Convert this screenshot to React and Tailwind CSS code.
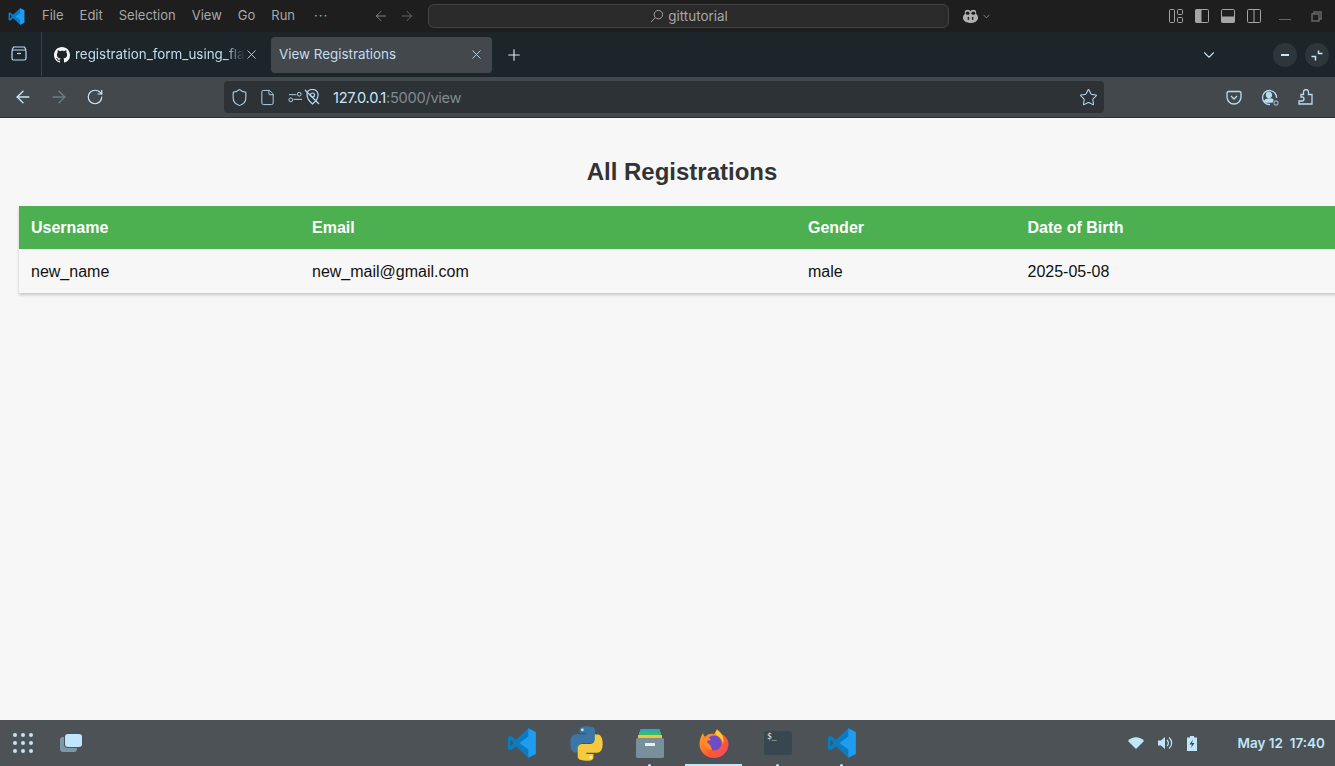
import React from 'react';
import { ArrowLeft, ArrowRight, RotateCw, Shield, File, Star, X, Plus, ChevronDown } from 'lucide-react';

const font = "font-['Inter','Noto_Sans',sans-serif]";

const VSCodeLogo = ({ size = 18 }) => (
  <svg width={size} height={size} viewBox="0 0 100 100">
    <path d="M71 99 L96 87 V13 L71 1 L30 39 L12 25 L3 30 V70 L12 75 L30 61 Z M71 28 V72 L41 50 Z M12 38 L22 50 L12 62 Z" fill="#0a7cc4" fillRule="evenodd" />
    <path d="M71 1 L96 13 V87 L71 99 Z M71 28 L41 50 L71 72 Z" fill="#1f9cf0" fillRule="evenodd" />
  </svg>
);

const GithubMark = () => (
  <svg width="16" height="16" viewBox="0 0 16 16" fill="#f4f6f7">
    <path d="M8 0C3.58 0 0 3.58 0 8c0 3.54 2.29 6.53 5.47 7.59.4.07.55-.17.55-.38 0-.19-.01-.82-.01-1.49-2.01.37-2.53-.49-2.69-.94-.09-.23-.48-.94-.82-1.13-.28-.15-.68-.52-.01-.53.63-.01 1.08.58 1.23.82.72 1.21 1.87.87 2.33.66.07-.52.28-.87.51-1.07-1.78-.2-3.64-.89-3.64-3.95 0-.87.31-1.59.82-2.15-.08-.2-.36-1.02.08-2.12 0 0 .67-.21 2.2.82.64-.18 1.32-.27 2-.27s1.36.09 2 .27c1.53-1.04 2.2-.82 2.2-.82.44 1.1.16 1.92.08 2.12.51.56.82 1.27.82 2.15 0 3.07-1.87 3.75-3.65 3.95.29.25.54.73.54 1.48 0 1.07-.01 1.93-.01 2.2 0 .21.15.46.55.38A8.01 8.01 0 0 0 16 8c0-4.42-3.58-8-8-8z" />
  </svg>
);

const PythonLogo = () => (
  <svg width="37" height="37" viewBox="0 0 32 32" className="shrink-0">
    <path d="M15.9 1C9.8 1 10 3.7 10 3.7V7h6.1v1H6.8S2 7.400 2 15.700s4.300 8 4.300 8h2.500v-3.900s-.1-4.300 4.200-4.300h6.600s4 .1 4-3.900V4.700S24.200 1 15.900 1z" fill="#3a76a8" />
    <circle cx="12.400" cy="4.200" r="1.200" fill="#dbe8f2" />
    <path d="M16.100 31c6.100 0 5.900-2.700 5.900-2.700V25h-6.100v-1h9.300s4.800.6 4.800-7.700-4.300-8-4.300-8h-2.500v3.900s.1 4.300-4.200 4.300h-6.600s-4-.1-4 3.900v6.900S7.800 31 16.100 31z" fill="#f7c93e" />
    <circle cx="19.600" cy="27.800" r="1.200" fill="#fdf3c9" />
  </svg>
);

const FilesIcon = () => (
  <svg width="30" height="32" viewBox="0 0 30 32">
    <path d="M5 3 a1 1 0 0 1 1-1 h18 a1 1 0 0 1 1 1 v3 H5 Z" fill="#29a9c9" />
    <rect x="4" y="5" width="22" height="3" fill="#3fb86f" />
    <rect x="3" y="8" width="24" height="3" fill="#f6c42f" />
    <rect x="1" y="11" width="28" height="20" rx="1.500" fill="#78909c" />
    <rect x="10" y="16" width="10" height="3" rx="0.500" fill="#eceff1" />
  </svg>
);

const FirefoxLogo = () => (
  <svg width="30" height="30" viewBox="0 0 30 30">
    <defs>
      <linearGradient id="fx" x1="0" y1="0" x2="1" y2="1">
        <stop offset="0" stopColor="#ffb02e" />
        <stop offset="0.6" stopColor="#ff5a2c" />
        <stop offset="1" stopColor="#f0447a" />
      </linearGradient>
    </defs>
    <path d="M18 1 C20 3 21 4 22 6 C27 8 29.500 12 29.500 16 A14.500 14 0 0 1 .5 16 C.5 12 2 8 4 5 C4.500 7 5 8 6 9 C8 6 12 5 15 6 C16 4 17 3 18 1 Z" fill="url(#fx)" />
    <circle cx="15" cy="15" r="7.500" fill="#6e4bc9" />
    <path d="M3 9 C6 8 11 9 12 12 C9 12 8 13 8 14 C10 16 12 17 13 22 C7 21 3 16 3 9 Z" fill="#ff8a24" />
    <path d="M18 2 C22 4 26 9 24 16 C23 11 21 9 17 7 C16 5 17 3 18 2 Z" fill="#ffc933" />
  </svg>
);

const TerminalIcon = () => (
  <div className="w-7 h-6 rounded-[2px] bg-[#37474f] px-[3px] text-[8px] leading-[11px] text-[#eceff1] font-['DejaVu_Sans_Mono',monospace]">$_</div>
);

const DockApp = ({ children, dot, className = '' }) => (
  <div className={`relative flex items-center justify-center w-8 h-8 ${className}`}>
    {children}
    {dot && <div className="absolute -bottom-[7px] left-[14px] w-[3px] h-[2px] rounded-t-full bg-[#bfe6fb]" />}
  </div>
);

const MenuItem = ({ label }) => <span className="text-[13px] text-[#a8a8a8]">{label}</span>;

const LayoutIcon = ({ children }) => (
  <svg width="14" height="14" viewBox="0 0 14 14" fill="none" stroke="#a5a5a5">{children}</svg>
);

const TitleBar = () => (
  <div className="relative flex items-center h-8 bg-[#1e1e1e] shrink-0">
    <div className="ml-[8px] w-[18px]"><VSCodeLogo size={17} /></div>
    <div className="flex items-center gap-[16px] ml-[16px] w-[332px]">
      <MenuItem label="File" />
      <MenuItem label="Edit" />
      <MenuItem label="Selection" />
      <MenuItem label="View" />
      <MenuItem label="Go" />
      <MenuItem label="Run" />
      <span className="ml-[3px] text-[13px] tracking-[1px] text-[#a8a8a8]">···</span>
    </div>
    <ArrowLeft size={16} strokeWidth={1.2} className="text-[#9a9a9a] -ml-[1px]" />
    <ArrowRight size={16} strokeWidth={1.2} className="text-[#777] ml-[10px]" />
    <div className="ml-[13px] flex items-center justify-center gap-1 w-[521px] h-6 rounded-md bg-[#2a2a2a] border border-[#444] text-[13.4px] text-[#a8a8a8]">
      <svg width="15" height="15" viewBox="0 0 16 16" fill="none" stroke="#a8a8a8"><circle cx="10" cy="6" r="4.500" /><path d="M6.500 9.500 L2 14" /></svg>
      gittutorial
    </div>
    <svg width="17" height="16" viewBox="0 0 18 16" className="ml-[13px]" fill="#b0b0b0">
      <path d="M3 4 C3 1 7 1 8 2 L9 3 L10 2 C11 1 15 1 15 4 V6 C17 7 17 10 17 11 C15 15 12 15.500 9 15.500 C6 15.500 3 15 1 11 C1 10 1 7 3 6 Z" />
      <ellipse cx="6" cy="5" rx="2" ry="1.800" fill="#1e1e1e" />
      <ellipse cx="12" cy="5" rx="2" ry="1.800" fill="#1e1e1e" />
      <rect x="6" y="9" width="1.500" height="3" fill="#1e1e1e" />
      <rect x="10.500" y="9" width="1.500" height="3" fill="#1e1e1e" />
    </svg>
    <ChevronDown size={11} className="text-[#8a8a8a] ml-[2px]" />
    <div className="ml-auto flex items-center gap-[12px] mr-[13px]">
      <LayoutIcon><rect x="0.500" y="0.500" width="5" height="13" rx="1" /><rect x="8.500" y="0.500" width="5" height="5" rx="1" /><rect x="8.500" y="8.500" width="5" height="5" rx="1" /></LayoutIcon>
      <LayoutIcon><rect x="0.500" y="0.500" width="13" height="13" rx="1" /><rect x="1" y="1" width="5" height="12" fill="#a5a5a5" /></LayoutIcon>
      <LayoutIcon><rect x="0.500" y="0.500" width="13" height="13" rx="1" /><rect x="1" y="8" width="12" height="5" fill="#a5a5a5" /></LayoutIcon>
      <LayoutIcon><rect x="0.500" y="0.500" width="13" height="13" rx="1" /><path d="M7 1 V13" /></LayoutIcon>
      <div className="w-[12px] h-px bg-[#666] mt-[6px] ml-[6px]" />
      <svg width="11" height="11" viewBox="0 0 11 11" fill="none" stroke="#666" strokeWidth="1.500" className="ml-[8px]"><rect x="1" y="3" width="7" height="7" /><path d="M3 3 V1 H10 V8 H8" /></svg>
    </div>
  </div>
);

const TabBar = () => (
  <div className="flex items-center h-[45px] bg-[#1c2529] shrink-0">
    <div className="flex items-center justify-center w-[42px] h-full border-r border-[#3b4448] mt-[-3px]">
      <svg width="16" height="15" viewBox="0 0 16 15" fill="none" stroke="#b6dcf2" strokeWidth="1.200" className="-ml-[4px] mt-[1px]">
        <path d="M1 4 L2.500 1 H13.500 L15 4" />
        <rect x="1" y="4" width="14" height="10" rx="1.500" />
        <path d="M6 7.500 H10" />
      </svg>
    </div>
    <div className="flex items-center w-[229px] h-9 pl-[12px]">
      <GithubMark />
      <span className="ml-[5px] w-[170px] whitespace-nowrap text-[13.4px] text-[#c3dded] [mask-image:linear-gradient(to_right,black_150px,transparent)]">registration_form_using_fla</span>
      <X size={15} strokeWidth={1.4} className="text-[#c3dded] -ml-[1px]" />
    </div>
    <div className="flex items-center w-[221px] h-9 px-2 rounded bg-[#42484c]">
      <span className="flex-1 text-[13.4px] text-[#c3dded]">View Registrations</span>
      <X size={15} strokeWidth={1.4} className="text-[#c3dded] -ml-[1px]" />
    </div>
    <Plus size={18} strokeWidth={1.5} className="ml-[13px] text-[#dcecf5]" />
    <ChevronDown size={18} strokeWidth={1.5} className="ml-auto text-[#c3dded]" />
    <div className="ml-[55px] flex items-center justify-center w-6 h-6 rounded-full bg-[#2d363b]">
      <div className="w-2 h-[2px] bg-[#c9e6f7]" />
    </div>
    <div className="ml-2 mr-[6px] flex items-center justify-center w-6 h-6 rounded-full bg-[#2d363b]">
      <svg width="12" height="12" viewBox="0 0 12 12" fill="none" stroke="#c9e6f7" strokeWidth="1.500"><path d="M7.500 1.500 V4.500 H11.500 M.5 7.500 H4.500 V11.500" /></svg>
    </div>
  </div>
);

const NavBar = () => (
  <div className="flex items-center h-[41px] bg-[#42484c] border-b border-[#2c3033] shrink-0">
    <ArrowLeft size={20} strokeWidth={1.6} className="ml-[13px] text-[#c9e6f7]" />
    <ArrowRight size={20} strokeWidth={1.6} className="ml-[16px] text-[#6f7d85]" />
    <RotateCw size={18} strokeWidth={1.6} className="ml-[17px] text-[#c9e6f7]" />
    <div className="ml-[120px] flex items-center w-[880px] h-8 rounded bg-[#2d3236] pl-[7px] pr-[6px]">
      <Shield size={19} strokeWidth={1.3} className="-ml-[1px] text-[#b6dcf2]" />
      <File size={17} strokeWidth={1.3} className="ml-[10px] text-[#b6dcf2]" />
      <svg width="15" height="12" viewBox="0 0 16 12" fill="none" stroke="#b6dcf2" className="ml-[12px]">
        <circle cx="12" cy="3" r="2" />
        <path d="M1 3.500 H9" />
        <circle cx="3" cy="9" r="2" />
        <path d="M6 8.500 H15" />
      </svg>
      <svg width="16" height="16" viewBox="0 0 16 16" fill="none" stroke="#b6dcf2" strokeWidth="1.200" className="ml-[1px]">
        <path d="M3 5 C3 -1 13 -1 14 5 C14.500 9 11 13 8.500 15 C6 13 3 9 3 5 Z" />
        <circle cx="8.500" cy="6" r="2" />
        <path d="M1 1 L15 15" />
      </svg>
      <span className="ml-[13px] mt-px text-[14.67px] tracking-[-0.3px] text-[#c9e6f7]">127.0.0.1<span className="text-[#7d8b93]">:5000/view</span></span>
      <Star size={19} strokeWidth={1.3} className="ml-auto text-[#b6dcf2]" />
    </div>
    <div className="ml-auto flex items-center gap-[19px] mr-[22px]">
      <svg width="16" height="15" viewBox="0 0 16 15" fill="none" stroke="#b6dcf2" strokeWidth="1.300" className="-ml-[4px]">
        <path d="M1 3 a1.500 1.500 0 0 1 1.500-1.500 h11 a1.500 1.500 0 0 1 1.500 1.500 v4 a7 7 0 0 1 -14 0 Z" />
        <path d="M5 6 L8 9 L11 6" />
      </svg>
      <svg width="18" height="17" viewBox="0 0 18 17" fill="none" stroke="#b6dcf2" strokeWidth="1.300">
        <path d="M15.500 9 A7 7 0 1 0 9 15.500" />
        <circle cx="8" cy="6" r="2.500" fill="#b6dcf2" />
        <path d="M3.500 12 C5 9.500 11 9.500 12 11 L11 13 H5 Z" fill="#b6dcf2" />
        <circle cx="15" cy="14" r="2" stroke="#8aa2b0" />
      </svg>
      <svg width="15" height="16" viewBox="0 0 15 16" fill="none" stroke="#b6dcf2" strokeWidth="1.300">
        <path d="M1 15 H14 V5.500 H10.500 V3 A2.500 2.500 0 0 0 5.500 3 V5.500 H3 V8 H4 A2 2 0 0 1 4 12 H1 Z" />
      </svg>
    </div>
  </div>
);

const RegistrationsPage = () => (
  <div className="flex-1 overflow-hidden bg-[#f7f7f7] font-['Liberation_Sans',Arial,sans-serif]">
    <h2 className="w-[1364px] pt-[38px] mb-[19px] text-center text-[24px] leading-[31px] font-bold text-[#333]">All Registrations</h2>
    <table className="ml-[19px] w-[1340px] table-fixed border-collapse shadow-[0_2px_3px_rgba(0,0,0,0.2)] text-[16px]">
      <colgroup>
        <col className="w-[281px]" />
        <col className="w-[496px]" />
        <col className="w-[219.5px]" />
        <col />
      </colgroup>
      <thead>
        <tr className="h-[43px] bg-[#4caf50] text-white">
          <th className="px-3 text-left font-bold">Username</th>
          <th className="px-3 text-left font-bold">Email</th>
          <th className="px-3 text-left font-bold">Gender</th>
          <th className="px-3 text-left font-bold">Date of Birth</th>
        </tr>
      </thead>
      <tbody>
        <tr className="h-[44px] text-[#111]">
          <td className="px-3 pt-px">new_name</td>
          <td className="px-3 pt-px">new_mail@gmail.com</td>
          <td className="px-3 pt-px">male</td>
          <td className="px-3 pt-px">2025-05-08</td>
        </tr>
      </tbody>
    </table>
  </div>
);

const Dock = () => (
  <div className="relative flex items-center h-[46px] bg-[#4d5256] shrink-0">
    <div className="ml-[13px] grid grid-cols-3 gap-[4px]">
      {[0, 1, 2, 3, 4, 5, 6, 7, 8].map(i => (
        <div key={i} className="w-1 h-1 rounded-full bg-[#bfe6fb]" />
      ))}
    </div>
    <div className="relative ml-[27px] w-[22px] h-[18px]">
      <div className="absolute left-0 top-[3px] w-[17px] h-[15px] rounded-[3px] bg-[#7f97a5]" />
      <div className="absolute left-[5px] top-0 w-[17px] h-[13px] rounded-[3px] bg-[#bfe6fb] ring-1 ring-[#4d5256]" />
    </div>
    <div className="ml-[424px] flex items-center gap-[32px]">
      <DockApp><VSCodeLogo size={30} /></DockApp>
      <DockApp><PythonLogo /></DockApp>
      <DockApp dot><FilesIcon /></DockApp>
      <DockApp>
        <FirefoxLogo />
        <div className="absolute -bottom-[7px] -left-[13px] w-[57px] h-[2px] bg-[#bfe6fb]" />
      </DockApp>
      <DockApp dot><TerminalIcon /></DockApp>
      <DockApp dot><VSCodeLogo size={30} /></DockApp>
    </div>
    <div className="ml-auto flex items-center mr-[10px]">
      <svg width="16" height="12" viewBox="0 0 16 12" fill="#bfe6fb"><path d="M0 4 C4 -1 12 -1 16 4 L8 12 Z" /></svg>
      <svg width="16" height="14" viewBox="0 0 16 14" className="ml-[13px]" fill="#bfe6fb">
        <path d="M1 4.500 H4 L8 1 V13 L4 9.500 H1 Z" />
        <path d="M10 4 A4 4 0 0 1 10 10 M12 1.500 A7 7 0 0 1 12 12.500" fill="none" stroke="#bfe6fb" strokeWidth="1.200" />
      </svg>
      <svg width="10" height="15" viewBox="0 0 10 15" className="ml-[14px]" fill="#bfe6fb">
        <path d="M3 0 H7 V1.500 H10 V15 H0 V1.500 H3 Z" />
        <path d="M6 3.500 L2.500 8.500 H5 L4 12 L7.500 7 H5 Z" fill="#37474f" />
      </svg>
      <span className="ml-[41px] text-[13.5px] font-semibold text-[#bfe6fb] whitespace-pre">May 12  17:40</span>
    </div>
  </div>
);

export default function App() {
  return (
    <div className={`flex flex-col w-[1335px] h-[766px] overflow-hidden ${font}`}>
      <TitleBar />
      <TabBar />
      <NavBar />
      <RegistrationsPage />
      <Dock />
    </div>
  );
}
